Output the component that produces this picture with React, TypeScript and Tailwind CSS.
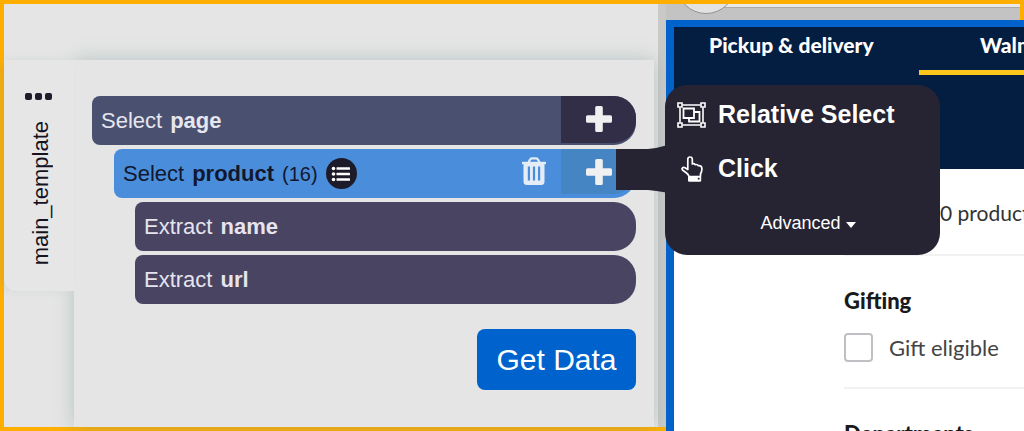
import clsx from "clsx"
import React from "react"

const PlusIcon = () => (
    <svg viewBox="0 0 26 26" className="size-[26px]" fill="currentColor">
        <path d="M10.800 0h4.400q1.600 0 1.600 1.600v7.600h7.600q1.600 0 1.600 1.600v4.400q0 1.600-1.600 1.600h-7.600v7.600q0 1.600-1.600 1.600h-4.400q-1.600 0-1.600-1.600v-7.600H1.600Q0 16.800 0 15.200v-4.400q0-1.600 1.600-1.600h7.600V1.600Q9.200 0 10.800 0z" />
    </svg>
)

const TrashIcon = () => (
    <svg viewBox="0 0 26 28" className="h-7 w-[26px]" fill="none" stroke="currentColor">
        <path d="M1 6h24" strokeWidth="2.400" />
        <path d="M7.500 5.500l1.400-2.700Q9.500 1.300 11 1.300h4q1.500 0 2.100 1.500l1.400 2.700" strokeWidth="2.200" />
        <path
            fillRule="evenodd"
            fill="currentColor"
            stroke="none"
            d="M2.500 6h21v18.500q0 3.500-3.500 3.500H6q-3.500 0-3.500-3.500zM6.800 9.500v14h2.200v-14zM11.900 9.500v14h2.200v-14zM17 9.500v14h2.200v-14z"
        />
    </svg>
)

const ListIcon = () => (
    <svg viewBox="0 0 20 16" className="h-4 w-5" fill="currentColor">
        <circle cx="2.500" cy="2.500" r="1.800" />
        <circle cx="2.500" cy="8" r="1.800" />
        <circle cx="2.500" cy="13.500" r="1.800" />
        <rect x="5.500" y="1.200" width="13.500" height="2.600" rx="0.500" />
        <rect x="5.500" y="6.700" width="13.500" height="2.600" rx="0.500" />
        <rect x="5.500" y="12.200" width="13.500" height="2.600" rx="0.500" />
    </svg>
)

const ObjectGroupIcon = () => (
    <svg viewBox="0 0 29 26" className="h-[26px] w-[29px]" fill="none" stroke="currentColor" strokeWidth="1.600">
        <path d="M5.500 3h18M5.500 23h18M3 5.500v15M26 5.500v15" />
        <path d="M1 1h4v4H1zM24 1h4v4h-4zM1 21h4v4H1zM24 21h4v4h-4z" />
        <path d="M6.500 6.500h10.500v9.500H6.500z" strokeWidth="1.800" />
        <path d="M17 10h5.500v9.500H12V16" strokeWidth="1.800" />
    </svg>
)

const HandIcon = () => (
    <svg viewBox="0 0 22 26" className="h-[26px] w-[22px]" fill="none" stroke="currentColor" strokeWidth="1.700" strokeLinejoin="round">
        <path d="M8 20.500Q7.500 18.500 5.500 17L1.800 14.300Q0.500 13 1.400 12Q2.300 11 4 11.800L6.800 13.500V3.200Q6.900 1 9 1Q11.200 1 11.300 3.200V8Q13 7.200 14.300 8.700Q16.300 8 17.400 9.700Q20.800 9.300 20.900 12.600Q21 15.500 19.500 18V20.500" />
        <path fillRule="evenodd" fill="currentColor" stroke="none" d="M8 19.800h11q1.200 0 1.200 1.200v3.600q0 1.200-1.200 1.200H8.200Q7 25.800 7 24.600V21q0-1.200 1-1.200zM16.800 21.800v1.800h1.800v-1.800z" />
    </svg>
)

const ActionMenu = () => (
    <div className="absolute -top-16 left-full z-20 -ml-5 flex items-start text-white">
        <svg viewBox="0 0 50 48" className="-mr-px mt-15 h-12 w-[50px] shrink-0">
            <path d="M0 4h32Q40 3.500 50 0.500v47Q40 45.500 32 45H0z" fill="#262332" />
        </svg>
        <div className="flex h-[170px] w-[275px] flex-col rounded-[22px] bg-[#262332] px-3 pt-3">
            <button className="flex h-9 items-center gap-3 text-left text-[25px] font-bold">
                <span className="flex w-[29px] justify-center"><ObjectGroupIcon /></span>
                Relative Select
            </button>
            <button className="mt-[18px] flex h-9 items-center gap-3 text-left text-[25px] font-bold">
                <span className="flex w-[29px] justify-center"><HandIcon /></span>
                Click
            </button>
            <button className="mt-6 flex items-center gap-1 self-center pl-3 text-[18px] leading-6">
                Advanced
                <svg viewBox="0 0 12 8" className="mt-1 h-2 w-3" fill="currentColor">
                    <path d="M1 1h10L6 7z" />
                </svg>
            </button>
        </div>
    </div>
)

type CommandProps = {
    verb: string
    name: string
    className?: string
    children?: React.ReactNode
}

const Command = ({ verb, name, className, children }: CommandProps) => (
    <li className={clsx("relative flex h-[49px] items-center gap-2 rounded-l-lg rounded-r-[22px] pl-[9px] text-[22px]", className)}>
        <span>{verb}</span>
        <strong>{name}</strong>
        {children}
    </li>
)

const AddButton = ({ className, label }: { className: string; label: string }) => (
    <button aria-label={label} className={clsx("flex w-[75px] items-center justify-center self-stretch rounded-r-[22px] text-[#f0f0f0]", className)}>
        <PlusIcon />
    </button>
)

const TemplatePanel = () => (
    <section className="relative z-10 flex border-y-4 border-l-4 border-[#ffae00] bg-[#e5e5e5]">
        <div className="flex min-w-0 flex-1 pt-14 pr-1">
            <div className="relative z-10 flex w-[70px] flex-col items-center self-start rounded-bl-xl bg-[#e6e6e6] pt-[33px] pb-[26px] shadow-[-6px_0_12px_-4px_rgba(120,150,145,0.300)]">
                <button aria-label="Template options" className="mr-px flex gap-[3px]">
                    <span className="size-[7px] rounded-xs bg-[#1f1c2b]" />
                    <span className="size-[7px] rounded-xs bg-[#1f1c2b]" />
                    <span className="size-[7px] rounded-xs bg-[#1f1c2b]" />
                </button>
                <span className="mt-[21px] ml-1 rotate-180 text-[22px] leading-8 text-[#15131f] [writing-mode:vertical-rl]">main_template</span>
            </div>
            <div className="relative min-w-0 flex-1 bg-[#e5e5e5] pt-9 pr-[18px] pl-[18px] shadow-[0_0_18px_rgba(110,145,140,0.400)]">
                <ul className="flex flex-col gap-1">
                    <Command verb="Select" name="page" className="bg-[#4a5070] text-[#e6e6ee]">
                        <span className="ml-auto flex self-stretch pb-0.5">
                            <AddButton label="Add command to page" className="bg-[#332e48] pb-0.5" />
                        </span>
                    </Command>
                    <Command verb="Select" name="product" className="ml-[22px] bg-[#4a8edb] text-[#12172e]">
                        <span className="text-[20px]">(16)</span>
                        <button aria-label="Show list" className="flex size-[31px] items-center justify-center rounded-full bg-[#1d1b29] text-white">
                            <ListIcon />
                        </button>
                        <button aria-label="Delete" className="mr-[6px] mb-1.5 ml-auto text-[#e4ecf5]">
                            <TrashIcon />
                        </button>
                        <span className="flex self-stretch pb-1">
                            <AddButton label="Add command to product" className="bg-[#4685c4]" />
                        </span>
                        <ActionMenu />
                    </Command>
                    <Command verb="Extract" name="name" className="ml-[43px] bg-[#484462] text-[#e6e4ee]" />
                    <Command verb="Extract" name="url" className="ml-[43px] bg-[#484462] text-[#e6e4ee]" />
                </ul>
                <div className="mt-[25px] flex justify-end">
                    <button className="h-[61px] w-[159px] rounded-lg bg-[#0062cc] text-[30px] text-white">Get Data</button>
                </div>
            </div>
        </div>
        <div className="w-2 bg-[#c9cac8]" />
    </section>
)

const StorePreview = () => (
    <section className="flex min-w-0 flex-col overflow-hidden font-['Lato',sans-serif]">
        <div className="relative h-5 shrink-0 overflow-hidden border-t-4 border-r-4 border-[#ffae00] bg-[#c3c3c3]">
            <div className="ml-[50px] h-1 border-b border-[#aaaaaa] bg-[#e8e8e8]" />
            <div className="absolute -top-[50px] left-[10px] size-15 rounded-full border border-[#929292] bg-[#e2e2e2]" />
        </div>
        <div className="min-h-0 flex-1 overflow-hidden border-t-[7px] border-l-8 border-[#0062cc] bg-white">
            <nav className="flex h-[142px] items-start bg-[#041e42] text-[21px] leading-6 font-black whitespace-nowrap text-white">
                <a href="#pickup" className="ml-[35px] w-[210px] shrink-0 pt-1.5">Pickup &amp; delivery</a>
                <a href="#walmart" className="min-w-0 flex-1 overflow-hidden border-b-[5px] border-[#fcc61c] pt-1.5 pb-[13px] pl-[61px]">Walm</a>
            </nav>
            <div className="ml-[170px] whitespace-nowrap text-[#333333]">
                <p className="border-b-2 border-[#f2f2f2] pt-8 pb-[29px] pl-24 text-[21px] leading-6">0 products</p>
                <fieldset className="border-b-2 border-[#f2f2f2] pb-[25px]">
                    <legend className="pt-[31px] text-[22px] leading-7 font-black text-[#1a1a1a]">Gifting</legend>
                    <label className="mt-[18px] flex items-center gap-4 text-[22px] leading-7 text-[#444444]">
                        <input type="checkbox" className="size-[29px] appearance-none rounded-sm border-2 border-[#c0c0c4] bg-white" />
                        Gift eligible
                    </label>
                </fieldset>
                <h2 className="pt-[31px] text-[22px] leading-7 font-black text-[#1a1a1a]">Departments</h2>
            </div>
        </div>
    </section>
)

export default function App() {
    return (
        <main className="grid h-screen grid-cols-[666fr_358fr] overflow-hidden font-['Liberation_Sans',Arial,sans-serif]">
            <TemplatePanel />
            <StorePreview />
        </main>
    )
}
